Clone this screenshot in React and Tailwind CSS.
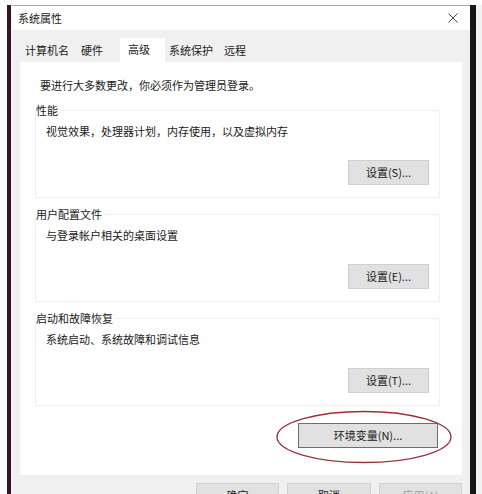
const font = { fontFamily: '"Noto Sans CJK SC", "Microsoft YaHei", sans-serif' }

function Btn({ children, className = "" }) {
  return (
    <div className={`h-[25px] flex items-center justify-center bg-[#e1e1e1] border border-[#d0d0d0] text-[11px] text-[#1a1a1a] ${className}`}>
      {children}
    </div>
  )
}

function Group({ title, desc, btn, className = "" }) {
  return (
    <fieldset className={`border border-[#efefef] ml-[15px] mr-[22px] px-[10px] pb-[12px] ${className}`}>
      <legend className="text-[11px] leading-[14px] -ml-[10px] pr-[2px] text-[#1a1a1a]">{title}</legend>
      <div className="text-[11px] leading-[14px] pt-[7px] text-[#1a1a1a]">{desc}</div>
      <div className="flex justify-end mt-[22px]">
        <Btn className="w-[81px]">{btn}</Btn>
      </div>
    </fieldset>
  )
}

export default function App() {
  const tabs = [
    { name: "计算机名", cls: "pl-[5px] pr-[6px]" },
    { name: "硬件", cls: "pl-[6px] pr-[8px]" },
  ]
  return (
    <div className="w-[482px] h-[494px] bg-white flex pt-[5px] overflow-hidden" style={font}>
      <div className="w-[7px] shrink-0" />
      <div className="w-[4px] shrink-0 bg-[#3a1423]" />
      <div className="w-[1px] shrink-0 bg-[#f4f4f4]" />

      {/* window */}
      <div className="w-[458px] shrink-0 flex flex-col border-t border-[#a9a9a9]">
        {/* title bar */}
        <div className="h-[24px] shrink-0 bg-white flex items-center justify-between pl-[6px] pr-[12px]">
          <span className="text-[11px] text-[#1a1a1a]">系统属性</span>
          <svg width="10" height="10" viewBox="0 0 10 10">
            <path d="M0.5 0.5L9.5 9.5M9.5 0.5L0.5 9.5" stroke="#444" strokeWidth="1" />
          </svg>
        </div>

        {/* body */}
        <div className="flex-1 bg-[#f0f0f0] px-[8px] pt-[8px] flex flex-col">
          {/* tabs */}
          <div className="h-[24px] flex items-stretch text-[11px] text-[#1a1a1a]">
            {tabs.map(t => (
              <div key={t.name} className={`flex items-center ${t.cls}`}>{t.name}</div>
            ))}
            <div className="flex items-start pt-[3px] bg-white w-[45px] ml-[9px] pl-[8px]">高级</div>
            <div className="flex items-center pl-[4px] pr-[11px]">系统保护</div>
            <div className="flex items-center">远程</div>
          </div>

          {/* panel */}
          <div className="h-[413px] bg-white flex flex-col">
            <div className="text-[11px] leading-[14px] pl-[20px] pt-[16px] text-[#1a1a1a]">
              要进行大多数更改，你必须作为管理员登录。
            </div>
            <Group className="mt-[11px]" title="性能" desc="视觉效果，处理器计划，内存使用，以及虚拟内存" btn="设置(S)..." />
            <Group className="mt-[9px]" title="用户配置文件" desc="与登录帐户相关的桌面设置" btn="设置(E)..." />
            <Group className="mt-[9px]" title="启动和故障恢复" desc="系统启动、系统故障和调试信息" btn="设置(T)..." />
            <div className="flex justify-end mr-[24px] mt-[17px]">
              <div className="relative">
                <div className="w-[140px] h-[25px] flex items-center justify-center bg-[#e1e1e1] border border-[#6b6f73] text-[11px] text-[#1a1a1a]">
                  环境变量(N)...
                </div>
                <svg className="absolute -left-[23px] -top-[13px]" width="178" height="54" viewBox="0 0 178 54">
                  <ellipse cx="89" cy="27" rx="87" ry="25.5" fill="none" stroke="#9e2f3c" strokeWidth="1.3" />
                </svg>
              </div>
            </div>
          </div>

          {/* bottom buttons */}
          <div className="flex justify-end gap-[8px] mt-[8px]">
            <Btn className="w-[83px]">确定</Btn>
            <Btn className="w-[84px]">取消</Btn>
            <Btn className="w-[83px] text-[#a0a0a0]">应用(A)</Btn>
          </div>
        </div>
      </div>

      <div className="w-[6px] shrink-0 bg-[#161616]" />
      <div className="flex-1 bg-[#f2f2f2]" />
    </div>
  )
}
